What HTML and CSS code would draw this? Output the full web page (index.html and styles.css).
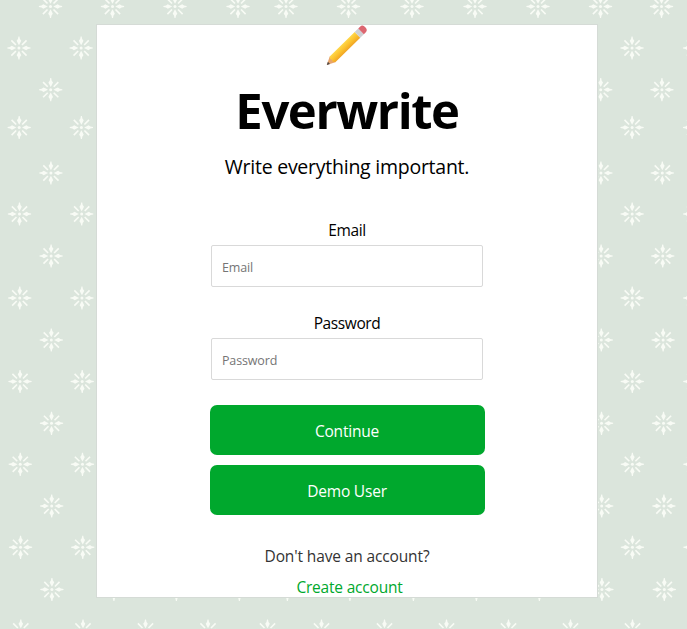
FILE: index.html
```html
<!DOCTYPE html>
<html lang="en">
<head>
<meta charset="utf-8">
<title>Everwrite</title>
<link rel="stylesheet" href="styles.css">
</head>
<body>
<svg class="wallpaper" width="687" height="629" viewBox="0 0 687 629" aria-hidden="true">
  <defs>
    <g id="petal">
      <path d="M0-2.800 1.100-4.800 2.300-7.200 1-9 .5-11.600-.5-11.600-1-9-2.300-7.200-1.100-4.800Z"/>
    </g>
    <g id="flower">
      <circle r="1.5"/>
      <use href="#petal"/>
      <use href="#petal" transform="rotate(90)"/>
      <use href="#petal" transform="rotate(180)"/>
      <use href="#petal" transform="rotate(270)"/>
      <path class="rays" d="M3-3 7.600-7.600M3 3 7.600 7.600M-3 3-7.600 7.600M-3-3-7.600-7.600"/>
    </g>
  </defs>
  <g id="flowers"></g>
</svg>
<main class="card">
  <svg class="logo" width="42" height="42" viewBox="0 0 42 42" aria-hidden="true">
    <defs>
      <linearGradient id="wood" x1="0" y1="0" x2="0" y2="1">
        <stop offset="0" stop-color="#ffd84a"/>
        <stop offset=".55" stop-color="#fbc02d"/>
        <stop offset="1" stop-color="#f0a425"/>
      </linearGradient>
    </defs>
    <g transform="translate(.8 40) rotate(-44.5)">
      <path d="M0 0 8-4V4Z" fill="#e8a56c"/>
      <path d="M0 0 3-1.500V1.500Z" fill="#4d4848"/>
      <path d="M8-4H43V4H8L6.500 1.600 7.400 0 6.500-1.600Z" fill="url(#wood)"/>
      <path d="M43-4h5v8H43Z" fill="#cdd0d4"/>
      <path d="M48-4h2.500q3.500 0 3.500 4t-3.500 4h-2.500Z" fill="#dc6670"/>
    </g>
  </svg>
  <h1 class="title">Everwrite</h1>
  <p class="tagline">Write everything important.</p>
  <form class="form">
    <label class="label" for="email">Email</label>
    <input class="field" id="email" type="text" placeholder="Email">
    <label class="label" for="password">Password</label>
    <input class="field" id="password" type="password" placeholder="Password">
    <button class="button" type="button">Continue</button>
    <button class="button" type="button">Demo User</button>
  </form>
  <p class="question">Don't have an account?</p>
  <a class="create">Create account</a>
</main>
<script src="wallpaper.js"></script>
</body>
</html>
```
FILE: styles.css
```css
* { box-sizing: border-box; }
body {
  margin: 0;
  height: 629px;
  overflow: hidden;
  padding-top: 25px;
  background: #dbe5dc;
  font-family: "Open Sans", "Noto Sans", sans-serif;
  font-size: 16px;
  color: #000;
}
.wallpaper {
  position: absolute;
  left: 0;
  top: 0;
  z-index: -1;
  fill: #f8fbf5;
}
.rays { stroke: #f8fbf5; stroke-width: 1.6; fill: none; }
.card {
  width: 500px;
  height: 572px;
  margin-left: 97px;
  background: #fff;
  box-shadow: 0 0 0 1px #d5dbd6;
  display: flex;
  flex-direction: column;
  align-items: center;
}
.logo { flex: none; display: block; }
.title {
  margin: 9px 0 0;
  font-size: 49px;
  line-height: 68px;
  font-weight: 700;
  letter-spacing: -1.4px;
}
.tagline { margin: 10px 0 0; font-size: 19.5px; line-height: 26px; letter-spacing: -.25px; }
.form {
  width: 275px;
  margin-top: 39px;
  display: flex;
  flex-direction: column;
  align-items: center;
}
.label { line-height: 22px; margin-bottom: 4px; font-size: 15.5px; letter-spacing: -.4px; }
.field {
  width: 272px;
  height: 42px;
  margin: 0 0 25px;
  padding: 3px 10px 0;
  border: 1px solid #d9d9d9;
  border-radius: 2px;
  font: 12.5px "Open Sans", "Noto Sans", sans-serif;
  letter-spacing: -.15px;
  outline: 0;
}
.field::placeholder { color: #757575; }
.button {
  width: 275px;
  height: 50px;
  margin: 0 0 10px;
  padding: 2px 0 0;
  border: 0;
  border-radius: 7px;
  background: #00a82d;
  color: #fff;
  font: 15.5px "Open Sans", "Noto Sans", sans-serif;
  letter-spacing: -.2px;
}
.question { margin: 20px 0 0; line-height: 22px; font-size: 15.5px; letter-spacing: -.13px; color: #333; }
.create { margin: 9px 0 0 5px; line-height: 22px; font-size: 15.5px; letter-spacing: -.2px; color: #00a82d; }
```
FILE: wallpaper.js
```js
const NS = "http://www.w3.org/2000/svg";
const layer = document.getElementById("flowers");

function addRow(y, columns, drift) {
  for (const x of columns) {
    const flower = document.createElementNS(NS, "use");
    flower.setAttribute("href", "#flower");
    flower.setAttribute("x", x + drift * y / 629);
    flower.setAttribute("y", y);
    layer.appendChild(flower);
  }
}

for (const y of [6.5, 89.7, 173, 256, 340, 423.3, 506, 589.5]) {
  addRow(y, [50.5, 112.5, 175, 238, 286, 348.5, 412, 475, 538, 600.5], 1.5);
  addRow(y, [661.5], 3);
}
for (const y of [48, 127.5, 214, 298, 381.5, 464.3, 547.3, 631]) {
  addRow(y, [18.8, 81, 143.5, 206], 2);
  addRow(y, [267, 321, 384, 446, 508, 570, 632, 694.5], 0.5);
}
```
